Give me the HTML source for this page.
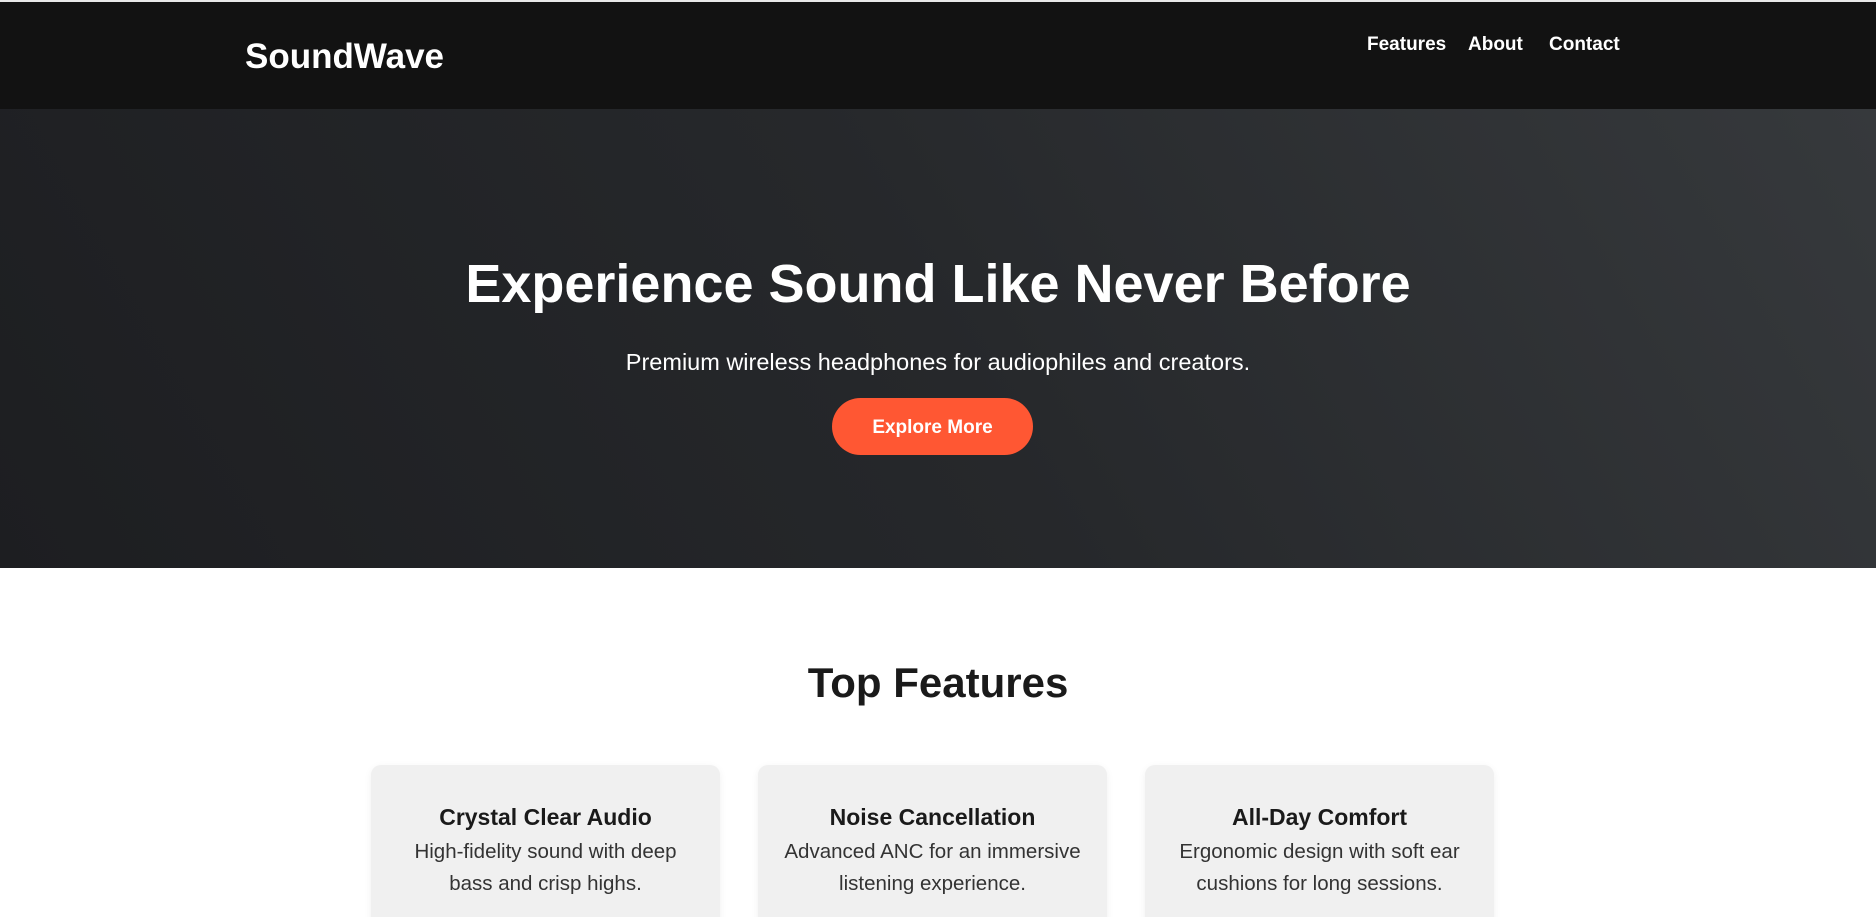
<!DOCTYPE html>
<html><head><meta charset="utf-8"><style>
*{margin:0;padding:0;box-sizing:border-box}
html,body{width:1876px;height:917px;overflow:hidden}
body{background:#fff;font-family:"Liberation Sans",sans-serif;color:#222}
#wrap{position:relative;width:1876px;height:917px;overflow:hidden;border-top:2px solid #e8e8e8}
nav{height:107px;background:#121212;position:relative;color:#fff}
.logo{position:absolute;left:245px;top:35px;font-size:35px;font-weight:bold}
.links{position:absolute;top:32px;left:1367px;font-size:19px;font-weight:bold}
.links span{position:absolute;white-space:nowrap}
.hero{height:459px;background:linear-gradient(60deg,#1d1e21 0%,#26282b 50%,#36393c 100%);color:#fff;text-align:center;position:relative}
.hero h1{position:absolute;left:0;right:0;top:148px;font-size:54px;line-height:1}
.hero p{position:absolute;left:0;right:0;top:240px;font-size:23.5px}
.btn{position:absolute;left:832px;top:289px;width:201px;height:57px;border-radius:29px;background:#ff5733;font-weight:bold;font-size:19px;line-height:60px}
h2{position:absolute;left:0;right:0;top:657px;text-align:center;font-size:42px;color:#1a1a1a}
.card{position:absolute;top:763px;width:349px;height:260px;background:#f0f0f0;border-radius:10px;text-align:center;box-shadow:0 2px 8px rgba(0,0,0,.06)}
.card h3{margin-top:39px;font-size:23px;color:#1a1a1a}
.card p{margin-top:5px;font-size:20.5px;line-height:32px;color:#333}
</style></head><body><div id="wrap">
<nav><div class="logo">SoundWave</div>
<div class="links"><span style="left:0">Features</span><span style="left:101px">About</span><span style="left:182px">Contact</span></div></nav>
<div class="hero"><h1>Experience Sound Like Never Before</h1>
<p>Premium wireless headphones for audiophiles and creators.</p>
<div class="btn">Explore More</div></div>
<h2>Top Features</h2>
<div class="card" style="left:371px"><h3>Crystal Clear Audio</h3><p>High-fidelity sound with deep<br>bass and crisp highs.</p></div>
<div class="card" style="left:758px"><h3>Noise Cancellation</h3><p>Advanced ANC for an immersive<br>listening experience.</p></div>
<div class="card" style="left:1145px"><h3>All-Day Comfort</h3><p>Ergonomic design with soft ear<br>cushions for long sessions.</p></div>
</div></body></html>
